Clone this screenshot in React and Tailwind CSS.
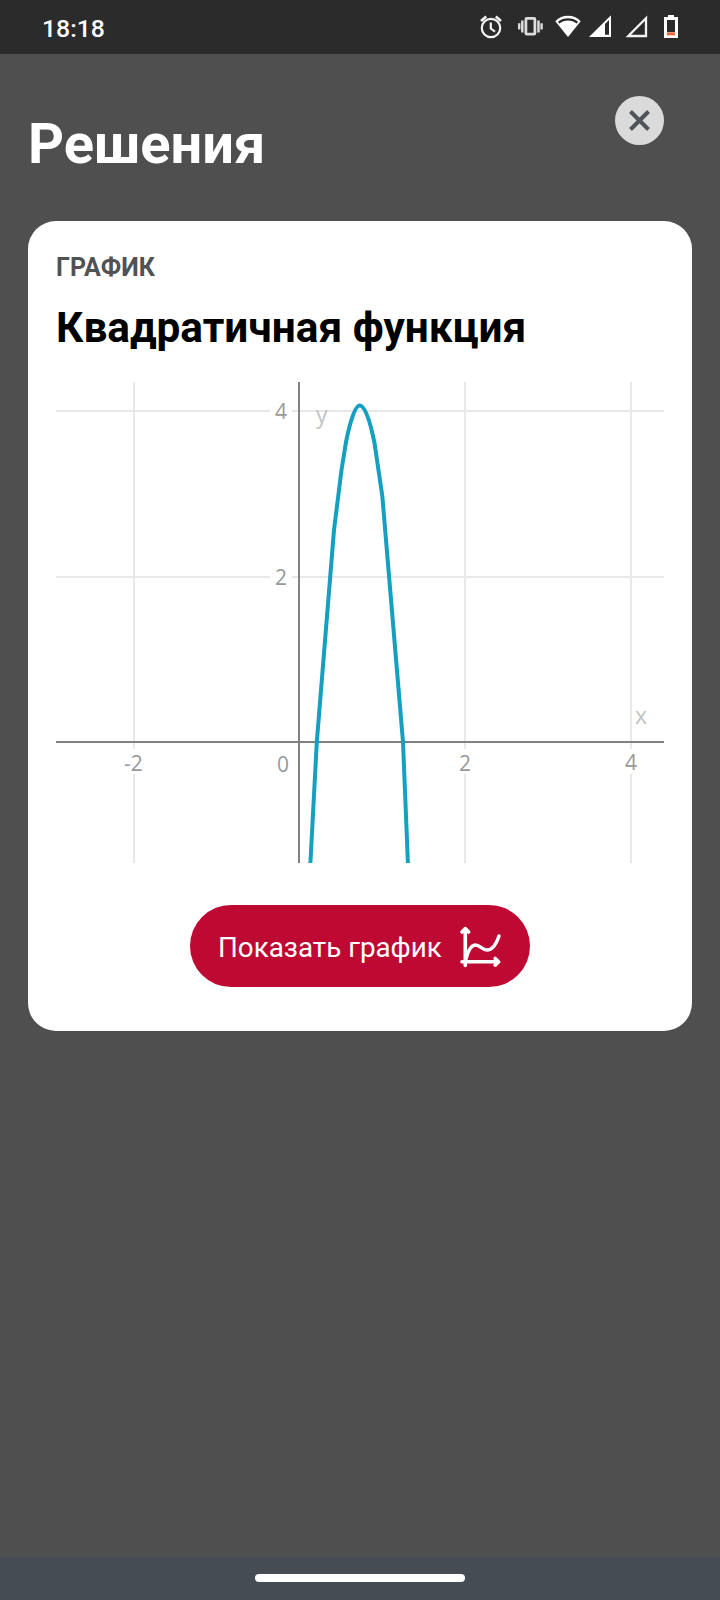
import React from "react";

function StatusIcons() {
  return (
    <svg width="240" height="54" viewBox="480 0 240 54" fill="none" className="block">
      <g stroke="#f4f4f4" strokeWidth="2.2">
        <circle cx="491" cy="28" r="9.2" />
        <path d="M490.8 22.5v6l4.2 3.2" />
        <path d="M481 20.9l5.2-4.4M501 20.9l-5.2-4.4" strokeWidth="2.6" />
      </g>
      <g stroke="#dcdcdc">
        <rect x="525.9" y="18.4" width="9" height="15.8" rx="1" strokeWidth="2.8" />
        <path d="M522.3 20.5v12M538.5 20.5v12" strokeWidth="2.5" />
        <path d="M519.2 23.2v6.2M541.6 23.2v6.2" strokeWidth="2.4" />
      </g>
      <path d="M555.3 21.2C562 14 574 14 580.7 21.2L568 37z" fill="#fff" />
      <path d="M558.6 22.6C564 18.4 572 18.4 577.4 22.6" stroke="#2b2b2b" strokeWidth="2.2" />
      <path d="M589 37L611 15.2v21.8z" fill="#fff" />
      <path d="M605 24L609 20V34.8h-4z" fill="#2b2b2b" />
      <path d="M628.3 36L646 18.2v17.8z" stroke="#f4f4f4" strokeWidth="2.3" />
      <path d="M668 15h6v2h4v21h-14V17h4z" fill="#fff" />
      <path d="M667 20h8v12h-8z" fill="#2b2b2b" />
      <path d="M667 32.3h8v3h-8z" fill="#e8663c" />
    </svg>
  );
}

function Chart() {
  return (
    <svg
      width="608"
      height="481"
      viewBox="56 382 608 481"
      className="block"
      fontFamily='"Open Sans", "Noto Sans", sans-serif'
      textAnchor="middle"
    >
      <path
        d="M134 382V863M465 382V863M631 382V863M56 411H664M56 577H664"
        stroke="#e8e8e8"
        strokeWidth="2"
      />
      <path d="M270 400h22v22h-22zM270 566h22v22h-22zM123 749h22v25h-22zM454 749h22v25h-22zM620 749h22v25h-22z" fill="#fff" />
      <path d="M299 382V863M56 742H664" stroke="#808080" strokeWidth="2" />
      <g fontSize="21" fill="#999">
        <text x="281" y="418.5">4</text>
        <text x="281" y="585">2</text>
        <text x="133.5" y="770.5">-2</text>
        <text x="283" y="771.5">0</text>
        <text x="465" y="770.5">2</text>
        <text x="631" y="769.5">4</text>
      </g>
      <g fontSize="23" fill="#c4c4c4">
        <text x="321.7" y="422.5">y</text>
        <text x="641" y="724">x</text>
      </g>
      <path
        d="M310.3 865L316.8 742L334 530L341.5 470L346 442C350 422 355 405.5 359.7 405.5C364.5 405.5 369.5 418 374.5 443L382.3 496L403 742L408 865"
        fill="none"
        stroke="#159fc0"
        strokeWidth="4"
        strokeLinejoin="round"
      />
    </svg>
  );
}

function GraphIcon() {
  return (
    <svg
      width="42"
      height="44"
      viewBox="459 925 42 44"
      fill="none"
      stroke="#fff"
      strokeLinecap="round"
      strokeLinejoin="round"
      className="mt-[2px] block"
    >
      <path strokeWidth="3.6" d="M465.3 965.5V930M462 932L465.3 928.6L468.6 932M462 961.8H498M495.2 958.5L498.6 961.8L495.2 965.1" />
      <path strokeWidth="3.4" d="M466.2 958.5C468.5 949.5 471 945 475.5 945C480 945 482 950 487 950C493 950 496.5 943.5 499 936" />
    </svg>
  );
}

export default function App() {
  return (
    <div className="flex h-[1600px] w-[720px] flex-col overflow-hidden bg-[#4f4f4f] font-['Roboto',sans-serif]">
      <header className="flex h-[54px] shrink-0 items-center justify-between bg-[#2b2b2b] pl-[42px]">
        <span className="pt-[3px] text-[24.8px] leading-8 font-medium text-white">18:18</span>
        <StatusIcons />
      </header>
      <div className="flex h-[167px] shrink-0 items-start justify-between pl-7 pr-14">
        <h1 className="pt-[57px] text-[56px] font-bold leading-[66px] text-white">Решения</h1>
        <button aria-label="Закрыть" className="mt-[42px] flex size-[49px] items-center justify-center rounded-full bg-[#dadada]">
          <svg width="25" height="25" viewBox="0 0 25 25" stroke="#505359" strokeWidth="4" className="block">
            <path d="M3.5 3.5L21.5 21.5M21.5 3.5L3.5 21.5" />
          </svg>
        </button>
      </div>
      <section className="mx-7 flex h-[810px] shrink-0 flex-col rounded-[28px] bg-white px-7">
        <p className="mt-[33px] text-[25px] font-bold leading-7 text-[#505254]">ГРАФИК</p>
        <h2 className="mt-[21px] whitespace-nowrap text-[42.4px] font-bold leading-[50px] text-black">Квадратичная функция</h2>
        <div className="mt-[29px]">
          <Chart />
        </div>
        <button className="mt-[42px] flex h-[82px] w-[340px] items-center justify-between self-center rounded-full bg-[#be0a32] pl-7 pr-[29px] text-white">
          <span className="whitespace-nowrap pt-[3px] text-[27.8px] leading-8">Показать график</span>
          <GraphIcon />
        </button>
      </section>
      <footer className="mt-auto flex h-[43px] shrink-0 items-start justify-center bg-[#464c54] pt-[17px]">
        <div className="h-2 w-[210px] rounded-full bg-white" />
      </footer>
    </div>
  );
}
